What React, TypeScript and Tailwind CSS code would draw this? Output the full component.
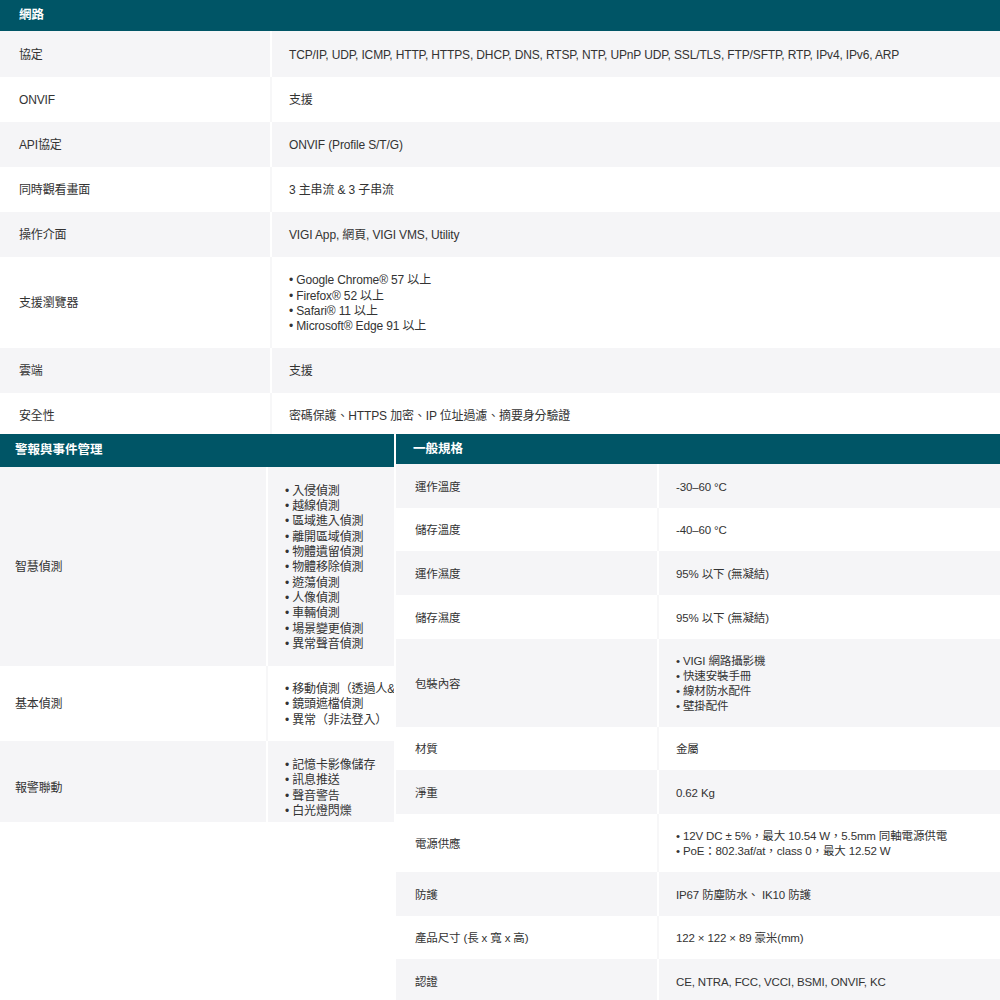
import React from "react";

type Row = { k: string; v: string[]; h: number; pt?: number };

const network: Row[] = [
  { k: "協定", v: ["TCP/IP, UDP, ICMP, HTTP, HTTPS, DHCP, DNS, RTSP, NTP, UPnP UDP, SSL/TLS, FTP/SFTP, RTP, IPv4, IPv6, ARP"], h: 46 },
  { k: "ONVIF", v: ["支援"], h: 45 },
  { k: "API協定", v: ["ONVIF (Profile S/T/G)"], h: 45 },
  { k: "同時觀看畫面", v: ["3 主串流 & 3 子串流"], h: 45 },
  { k: "操作介面", v: ["VIGI App, 網頁, VIGI VMS, Utility"], h: 45 },
  {
    k: "支援瀏覽器",
    v: ["• Google Chrome® 57 以上", "• Firefox® 52 以上", "• Safari® 11 以上", "• Microsoft® Edge 91 以上"],
    h: 91,
  },
  { k: "雲端", v: ["支援"], h: 45 },
  { k: "安全性", v: ["密碼保護、HTTPS 加密、IP 位址過濾、摘要身分驗證"], h: 41, pt: 6 },
];

const alarm: Row[] = [
  {
    k: "智慧偵測",
    v: [
      "• 入侵偵測",
      "• 越線偵測",
      "• 區域進入偵測",
      "• 離開區域偵測",
      "• 物體遺留偵測",
      "• 物體移除偵測",
      "• 遊蕩偵測",
      "• 人像偵測",
      "• 車輛偵測",
      "• 場景變更偵測",
      "• 異常聲音偵測",
    ],
    h: 199,
  },
  { k: "基本偵測", v: ["• 移動偵測（透過人&", "• 鏡頭遮檔偵測", "• 異常（非法登入）"], h: 75 },
  { k: "報警聯動", v: ["• 記憶卡影像儲存", "• 訊息推送", "• 聲音警告", "• 白光燈閃爍"], h: 81, pt: 14 },
];

const general: Row[] = [
  { k: "運作溫度", v: ["-30–60 °C"], h: 44 },
  { k: "儲存溫度", v: ["-40–60 °C"], h: 43 },
  { k: "運作濕度", v: ["95% 以下 (無凝結)"], h: 44 },
  { k: "儲存濕度", v: ["95% 以下 (無凝結)"], h: 44 },
  { k: "包裝內容", v: ["• VIGI 網路攝影機", "• 快速安裝手冊", "• 線材防水配件", "• 壁掛配件"], h: 88 },
  { k: "材質", v: ["金屬"], h: 43 },
  { k: "淨重", v: ["0.62 Kg"], h: 44 },
  {
    k: "電源供應",
    v: ["• 12V DC ± 5%，最大 10.54 W，5.5mm 同軸電源供電", "• PoE：802.3af/at，class 0，最大 12.52 W"],
    h: 58,
  },
  { k: "防護", v: ["IP67 防塵防水、 IK10 防護"], h: 44 },
  { k: "產品尺寸 (長 x 寬 x 高)", v: ["122 × 122 × 89 豪米(mm)"], h: 43 },
  { k: "認證", v: ["CE, NTRA, FCC, VCCI, BSMI, ONVIF, KC"], h: 44 },
];

const Header = ({ title, h, pl }: { title: string; h: string; pl: string }) => (
  <div className={`flex items-center bg-[#005566] text-[12.5px] font-bold text-white ${h} ${pl}`}>{title}</div>
);

const Table = ({
  rows,
  labelW,
  labelPl,
  valuePl,
  text,
  pt,
}: {
  rows: Row[];
  labelW: string;
  labelPl: string;
  valuePl: string;
  text: string;
  pt: number;
}) => (
  <div className={`${text} tracking-[-0.14px] text-[#333]`}>
    {rows.map((r, i) => {
      const gray = i % 2 === 0;
      const pad = { paddingTop: r.pt ?? pt };
      return (
        <div key={r.k} style={{ height: r.h }} className={`flex overflow-hidden ${gray ? "bg-[#f5f5f7]" : "bg-white"}`}>
          <div style={pad} className={`flex shrink-0 items-center ${labelW} ${labelPl}`}>
            {r.k}
          </div>
          <div
            style={pad}
            className={`flex min-w-0 flex-1 flex-col justify-center overflow-hidden whitespace-nowrap border-l-[2px] ${valuePl} ${
              gray ? "border-white" : "border-[#f7f7f8]"
            }`}
          >
            {r.v.map((line) => (
              <div key={line}>{line}</div>
            ))}
          </div>
        </div>
      );
    })}
  </div>
);

export default function App() {
  return (
    <div
      className="h-[1000px] w-[1000px] overflow-hidden bg-white"
      style={{ fontFamily: '"Liberation Sans", "Noto Sans CJK TC", sans-serif' }}
    >
      <Header title="網路" h="h-[31px]" pl="pl-[19px]" />
      <Table
        rows={network}
        labelW="w-[270px]"
        labelPl="pl-[19px]"
        valuePl="pl-[17px]"
        text="text-[12px] leading-[15.3px]"
        pt={3}
      />
      <div className="flex items-start gap-[2px]">
        <div className="w-[394px] shrink-0">
          <Header title="警報與事件管理" h="h-[33px]" pl="pl-[15px]" />
          <Table
            rows={alarm}
            labelW="w-[266px]"
            labelPl="pl-[15px]"
            valuePl="pl-[17px]"
            text="text-[12px] leading-[15.3px]"
            pt={3}
          />
        </div>
        <div className="flex-1">
          <Header title="一般規格" h="h-[30px]" pl="pl-[17px]" />
          <Table
            rows={general}
            labelW="w-[261px]"
            labelPl="pl-[19px]"
            valuePl="pl-[17px]"
            text="text-[11.5px] leading-[14.8px]"
            pt={2}
          />
        </div>
      </div>
    </div>
  );
}
